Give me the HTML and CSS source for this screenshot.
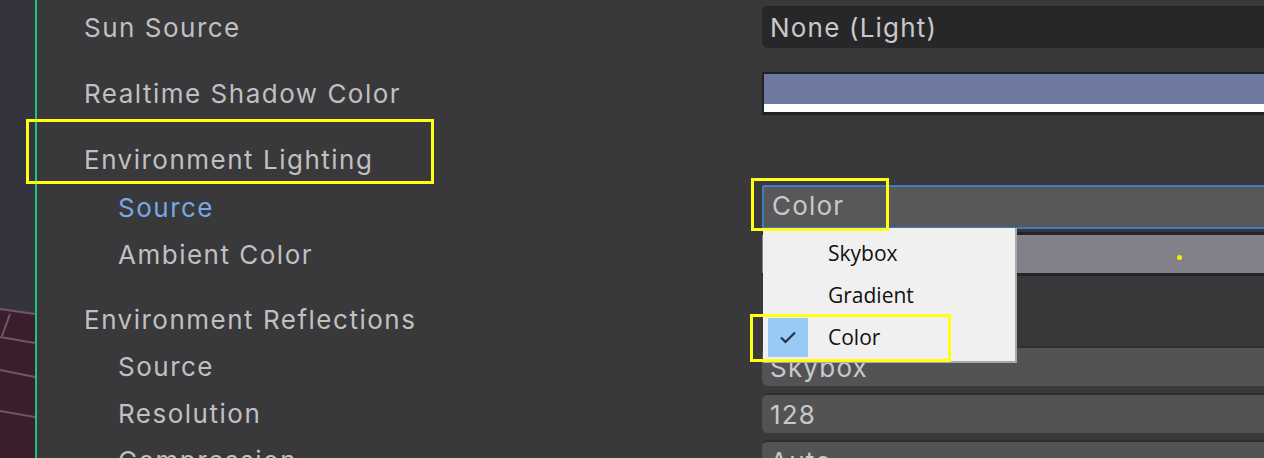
FILE: index.html
```html
<!DOCTYPE html>
<html lang="en">
<head>
<meta charset="utf-8">
<title>Lighting settings</title>
<link rel="stylesheet" href="styles.css">
</head>
<body>
<div class="app">
  <div class="scene">
    <svg class="scene-grid" width="35" height="458" viewBox="0 0 35 458">
      <polygon points="0,310 35,315 35,458 0,458" fill="#3a1e2d"/>
      <line x1="0" y1="309" x2="35" y2="314" stroke="#6b5a66" stroke-width="2"/>
      <line x1="10" y1="314" x2="2" y2="336" stroke="#6b5a66" stroke-width="2"/>
      <line x1="0" y1="337" x2="35" y2="343" stroke="#6b5a66" stroke-width="2"/>
      <line x1="0" y1="370" x2="35" y2="377" stroke="#6b5a66" stroke-width="2"/>
      <line x1="0" y1="411" x2="35" y2="417" stroke="#6b5a66" stroke-width="2"/>
    </svg>
  </div>
  <div class="divider"></div>
  <div class="inspector">
    <div class="row">
      <div class="label">Sun Source</div>
      <div class="field object">None (Light)</div>
    </div>
    <div class="row main">
      <div class="label">Realtime Shadow Color</div>
      <div class="color-field"><div class="swatch"></div><div class="alpha"></div></div>
    </div>
    <div class="row main">
      <div class="label">Environment Lighting</div>
    </div>
    <div class="row sub">
      <div class="label indent active">Source</div>
      <div class="field popup focused">Color</div>
    </div>
    <div class="row sub">
      <div class="label indent">Ambient Color</div>
      <div class="ambient"></div>
    </div>
    <div class="row main">
      <div class="label">Environment Reflections</div>
    </div>
    <div class="row sub">
      <div class="label indent">Source</div>
      <div class="field popup">Skybox</div>
    </div>
    <div class="row sub">
      <div class="label indent">Resolution</div>
      <div class="field popup">128</div>
    </div>
    <div class="row sub">
      <div class="label indent">Compression</div>
      <div class="field popup">Auto</div>
    </div>
  </div>

  <div class="menu">
    <div class="menu-item"><span class="check"></span><span class="menu-text">Skybox</span></div>
    <div class="menu-item"><span class="check"></span><span class="menu-text">Gradient</span></div>
    <div class="menu-item selected">
      <span class="check">
        <svg width="40" height="39" viewBox="0 0 40 39"><path d="M13 19.5 L17.5 24 L27 14.5" fill="none" stroke="#22304a" stroke-width="2.2"/></svg>
      </span>
      <span class="menu-text">Color</span>
    </div>
  </div>

  <div class="mark mark-heading"></div>
  <div class="mark mark-field"></div>
  <div class="mark mark-item"></div>
  <div class="dot"></div>
</div>
</body>
</html>
```

FILE: styles.css
```css
* { box-sizing: border-box; }

html, body {
  margin: 0;
  padding: 0;
  width: 1264px;
  height: 458px;
  overflow: hidden;
  background: #39383b;
}

.app {
  position: relative;
  display: flex;
  width: 1264px;
  height: 458px;
  overflow: hidden;
  font-family: Inter, "Noto Sans", sans-serif;
}

.scene {
  width: 35px;
  flex: none;
  background: #33343e;
}

.scene-grid { display: block; }

.divider {
  width: 2px;
  flex: none;
  background: #1ec47c;
}

.inspector {
  flex: 1;
  display: flex;
  flex-direction: column;
  padding-top: 6px;
  min-width: 0;
}

.row {
  display: grid;
  grid-template-columns: 725px 1fr;
  height: 42px;
  align-items: center;
  flex: none;
}

.row.main { margin-top: 24px; }
.row.sub { margin-top: 5px; }

.label {
  padding-left: 47px;
  font-size: 26px;
  letter-spacing: 1.5px;
  color: #c0c0c0;
  white-space: nowrap;
}

.label.indent { padding-left: 81px; }
.label.active { color: #7aa6e6; }

.field {
  margin-right: -20px;
  height: 40px;
  border-radius: 6px;
  padding-left: 8px;
  font-size: 26px;
  letter-spacing: 1.2px;
  color: #c9c9c9;
  display: flex;
  align-items: center;
  white-space: nowrap;
}

.field.object {
  height: 42px;
  background: #27272a;
  border-top: 1px solid #222224;
}

.field.popup {
  background: #535355;
  border-top: 2px solid #2f2f31;
}

.field.popup.focused {
  height: 44px;
  border-radius: 2px;
  background: #58585a;
  border: 2px solid #3f7bc2;
  padding-left: 8px;
  padding-bottom: 3px;
}

.color-field {
  margin-right: -20px;
  height: 43px;
  background: #222224;
  padding: 2px 0 3px 2px;
  display: flex;
  flex-direction: column;
}

.swatch {
  flex: 1;
  background: #6e79a1;
}

.alpha {
  height: 8px;
  background: #ffffff;
}

.ambient {
  margin-right: -20px;
  height: 44px;
  background: #828089;
  border-top: 3px solid #252527;
  border-bottom: 3px solid #252527;
}

.menu {
  position: absolute;
  left: 763px;
  top: 228px;
  width: 254px;
  height: 135px;
  background: #f0f0f0;
  border-right: 2px solid #a8a8a8;
  border-bottom: 2px solid #a8a8a8;
  padding-top: 4px;
  font-family: "Open Sans", "Noto Sans", sans-serif;
}

.menu-item {
  display: flex;
  align-items: center;
  height: 42px;
}

.check {
  width: 40px;
  height: 39px;
  margin-left: 5px;
  flex: none;
}

.selected .check { background: #99c9f5; }
.check svg { display: block; }

.menu-text {
  margin-left: 20px;
  font-size: 21px;
  color: #111111;
}

.mark {
  position: absolute;
  border: 3px solid #ffff14;
}

.mark-heading { left: 26px; top: 119px; width: 408px; height: 65px; }
.mark-field { left: 751px; top: 178px; width: 138px; height: 53px; }
.mark-item { left: 750px; top: 314px; width: 201px; height: 48px; }

.dot {
  position: absolute;
  left: 1177px;
  top: 255px;
  width: 5px;
  height: 5px;
  border-radius: 50%;
  background: #f0f000;
}
```
